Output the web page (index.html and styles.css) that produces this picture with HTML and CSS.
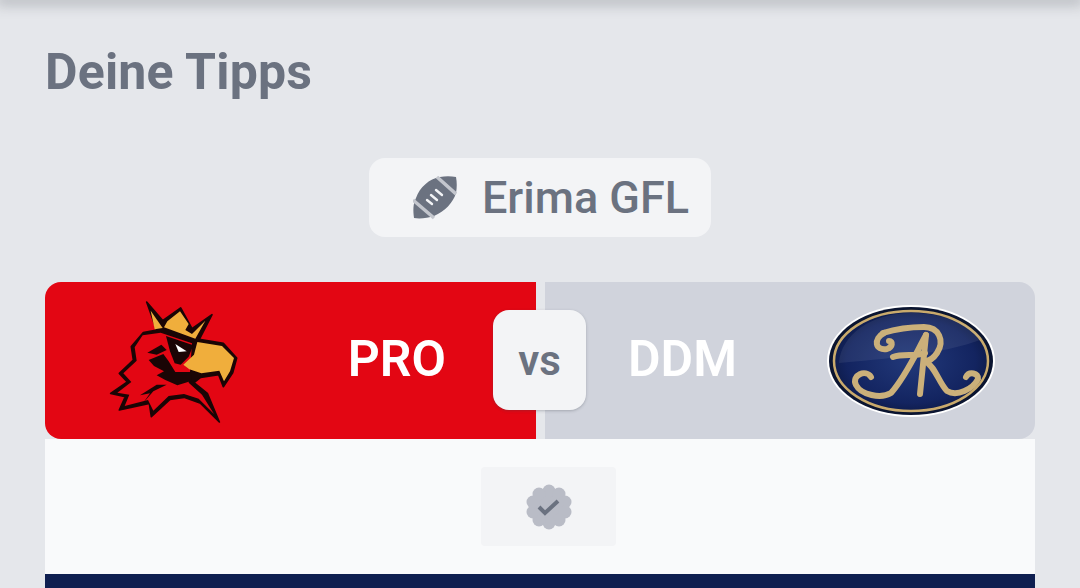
FILE: index.html
```html
<!DOCTYPE html>
<html lang="de">
<head>
<meta charset="UTF-8" />
<meta name="viewport" content="width=device-width, initial-scale=1" />
<title>Deine Tipps</title>
<link rel="stylesheet" href="styles.css">
</head>
<body>

<div class="topbar"></div>

<main class="content">
  <h1 class="title">Deine Tipps</h1>

  <div class="league-row">
    <div class="league">
      <svg class="league-icon" viewBox="0 0 44 44">
        <path d="M1 42C0 34 0 28 3 22C7 11 16 3 27 1C32 0 38 0 43 1C44 6 44 12 43 17C40 27 32 35 21 40C15 42 7 43 1 42Z" fill="#6b7280"/>
        <path d="M24 1L43 18M0 24L21 42" stroke="#c3c6cd" stroke-width="3.5" fill="none"/>
        <path d="M14 24L19 28M18 19L24 24M23 14L29 19" stroke="#f3f4f6" stroke-width="2.4" stroke-linecap="round" fill="none"/>
      </svg>
      <span class="league-name">Erima GFL</span>
    </div>
  </div>

  <section class="match">
    <div class="teams">
      <div class="team team-home">
        <svg class="logo-home" viewBox="0 0 510 450">
          <!-- outline -->
          <path d="M170 48L218 104L272 66L306 128L366 86L328 160L400 172L440 216L428 260L400 302L386 266L332 274L312 290L352 322L388 408L332 352L282 334L240 340L184 392L178 352L88 372L106 332L62 322L112 288L88 262L130 222L124 182L160 140L200 132Z" fill="#1a0505" stroke="#1a0505" stroke-width="5" stroke-linejoin="round"/>
          <!-- red feathers -->
          <path d="M158 148L212 140L306 172L300 258L296 290L336 326L372 384L326 338L282 324L236 330L190 374L174 342L104 360L118 326L82 320L124 288L100 262L140 224L134 184Z" fill="#e30613"/>
          <!-- dark streaks -->
          <path d="M176 222L220 204L236 226L256 258L302 258L306 284L262 298L226 282L200 268L222 256L192 240Z" fill="#1a0505"/>
          <path d="M172 200L214 176L230 192L200 206Z" fill="#1a0505"/>
          <path d="M230 296L190 316L160 350L180 322L150 328L200 296Z" fill="#1a0505"/>
          <!-- eye -->
          <path d="M228 150L310 178L296 212L272 236L254 232L240 196Z" fill="#1a0505"/>
          <path d="M256 174L290 196L266 198Z" fill="#fff"/>
          <!-- crown and beak -->
          <path d="M182 74L218 126L194 130Z" fill="#f0ae3c"/>
          <path d="M232 106L270 76L296 114L286 132L306 144L346 104L316 158L222 124Z" fill="#f0ae3c"/>
          <path d="M322 168L396 180L432 216L420 256L402 286L388 254L334 262L298 250L280 236L312 206Z" fill="#f0ae3c"/>
        </svg>
        <span class="team-name">PRO</span>
      </div>
      <div class="team team-away">
        <span class="team-name">DDM</span>
        <svg class="logo-away" viewBox="0 0 200 140">
          <defs>
            <radialGradient id="shine" cx="0.5" cy="0.5" r="0.6">
              <stop offset="0" stop-color="#22397a"/>
              <stop offset="0.7" stop-color="#132460"/>
              <stop offset="1" stop-color="#0a1538"/>
            </radialGradient>
          </defs>
          <ellipse cx="100" cy="70" rx="84" ry="56" fill="#fff"/>
          <ellipse cx="100" cy="70" rx="82" ry="54" fill="#0a1430"/>
          <ellipse cx="100" cy="70" rx="77" ry="50" fill="url(#shine)" stroke="#c9aa6c" stroke-width="2.5"/>
          <path d="M28 72C70 68 130 64 172 48C160 32 130 22 100 22C60 22 30 44 28 72Z" fill="#fff" opacity="0.07"/>
          <g fill="none" stroke="#cbb07a" stroke-linecap="round" stroke-linejoin="round" stroke-width="6">
            <path d="M72 42C85 38 100 36 113 36C128 36 134 50 126 62C122 68 118 70 114 70"/>
            <path d="M73 42C62 48 64 60 76 58C82 56 82 50 78 50"/>
            <path d="M115 44C105 62 95 85 80 102C70 108 50 104 45 94C40 84 55 78 60 86"/>
            <path d="M115 44L109 103"/>
            <path d="M82 66C92 62 104 66 114 62"/>
            <path d="M114 70C124 75 128 92 136 100C146 106 162 98 167 88C168 82 158 80 155 86"/>
          </g>
        </svg>
      </div>
    </div>
    <div class="versus">vs</div>

    <div class="tip-panel">
      <div class="tip-box">
        <svg class="tip-icon" viewBox="0 0 46 46">
          <g fill="#b9bcc6">
            <circle cx="23" cy="23" r="17"/>
            <circle cx="23" cy="7" r="6.5"/>
            <circle cx="33" cy="10" r="6.5"/>
            <circle cx="39" cy="18" r="6.5"/>
            <circle cx="39" cy="28" r="6.5"/>
            <circle cx="33" cy="36" r="6.5"/>
            <circle cx="23" cy="39" r="6.5"/>
            <circle cx="13" cy="36" r="6.5"/>
            <circle cx="7" cy="28" r="6.5"/>
            <circle cx="7" cy="18" r="6.5"/>
            <circle cx="13" cy="10" r="6.5"/>
          </g>
          <path d="M13 23L19 29L32 17" fill="none" stroke="#6b7280" stroke-width="4"/>
        </svg>
      </div>
    </div>
    <div class="footer-bar"></div>
  </section>
</main>

</body>
</html>
```

FILE: styles.css
```css
html, body {
  height: 100%;
  overflow: hidden;
}
body {
  margin: 0;
  background-color: #e5e7eb;
  font-family: Roboto, "Liberation Sans", sans-serif;
  color: #6b7280;
}
.topbar {
  height: 1px;
  margin-top: -1px;
  box-shadow: 0 0 14px 4px rgba(60, 65, 75, 0.35);
}
.content {
  padding: 44px 45px 0;
}
.title {
  margin: 0;
  font-size: 50px;
  line-height: 56px;
  font-weight: 700;
  letter-spacing: 0.2px;
  color: #6b7280;
}
.league-row {
  display: flex;
  justify-content: center;
  margin-top: 58px;
}
.league {
  display: flex;
  align-items: center;
  gap: 25px;
  height: 79px;
  padding: 0 22px 0 44px;
  border-radius: 16px;
  background-color: #f3f4f6;
}
.league-icon {
  width: 44px;
  height: 44px;
}
.league-name {
  font-size: 45px;
  font-weight: 500;
}
.match {
  position: relative;
  margin-top: 45px;
}
.teams {
  display: grid;
  grid-template-columns: 491px 490px;
  gap: 9px;
  height: 157px;
}
.team {
  display: flex;
  align-items: center;
  justify-content: space-between;
  color: #fff;
}
.team-name {
  padding-bottom: 4px;
  font-size: 50px;
  font-weight: 600;
}
.team-home {
  padding: 0 90px 0 45px;
  border-radius: 16px 0 0 16px;
  background-color: #e30613;
}
.team-away {
  padding: 0 24px 0 83px;
  border-radius: 0 16px 16px 0;
  background-color: #d0d3dc;
}
.logo-home {
  width: 170px;
  height: 150px;
}
.logo-away {
  width: 200px;
  height: 140px;
}
.versus {
  position: absolute;
  top: 28px;
  left: 448px;
  display: flex;
  align-items: center;
  justify-content: center;
  width: 93px;
  height: 100px;
  box-sizing: border-box;
  border-radius: 16px;
  background-color: #f3f4f6;
  box-shadow: 0 1px 3px rgba(60, 65, 75, 0.3);
  font-size: 42px;
  font-weight: 600;
}
.tip-panel {
  display: flex;
  justify-content: center;
  padding: 28px 0;
  background-color: #f9fafb;
}
.tip-box {
  display: flex;
  align-items: center;
  justify-content: center;
  width: 135px;
  height: 79px;
  margin-left: 17px;
  border-radius: 4px;
  background-color: #f3f4f6;
}
.tip-icon {
  width: 46px;
  height: 46px;
}
.footer-bar {
  height: 14px;
  background-color: #0f1f50;
}
```
